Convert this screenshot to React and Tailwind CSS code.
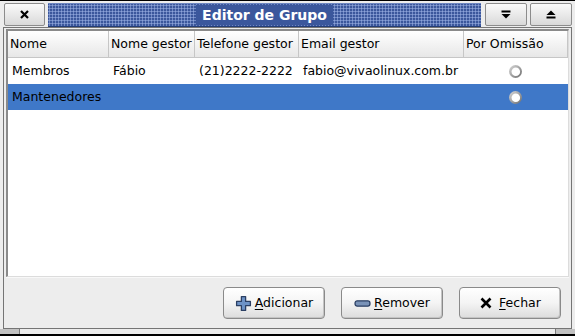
import React from "react";

const columns = [
  { label: "Nome", w: "w-[101px]" },
  { label: "Nome gestor", w: "w-[86px]" },
  { label: "Telefone gestor", w: "w-[104px]" },
  { label: "Email gestor", w: "w-[165px]" },
  { label: "Por Omissão", w: "w-[104px]" },
];

const rows = [
  { nome: "Membros", gestor: "Fábio", tel: "(21)2222-2222", email: "fabio@vivaolinux.com.br", selected: false },
  { nome: "Mantenedores", gestor: "", tel: "", email: "", selected: true },
];

const Radio = () => (
  <svg width="15" height="15" viewBox="0 0 15 15">
    <defs>
      <linearGradient id="rg" x1="0" y1="0" x2="1" y2="1">
        <stop offset="0" stopColor="#dcdcdc" />
        <stop offset="1" stopColor="#6a6a6a" />
      </linearGradient>
    </defs>
    <circle cx="7.5" cy="7.5" r="6.5" fill="url(#rg)" />
    <circle cx="7.8" cy="7.8" r="4.3" fill="#ffffff" />
  </svg>
);

const TitleButton = ({ children, className }) => (
  <div
    className={`h-[23px] flex items-center justify-center border border-[#8c8c8c] rounded-[2px] bg-gradient-to-b from-[#fafafa] to-[#d9d9d9] ${className}`}
  >
    {children}
  </div>
);

const ActionButton = ({ icon, first, rest }) => (
  <button className="w-[102px] h-[32px] flex items-center justify-center gap-[3px] border border-[#8a8a8a] rounded-[4px] bg-gradient-to-b from-[#ffffff] via-[#f4f4f4] to-[#dcdcdc] shadow-[inset_-1px_-1px_0_#c4c4c4] text-[12.5px] text-black">
    {icon}
    <span>
      <span className="underline underline-offset-2">{first}</span>
      {rest}
    </span>
  </button>
);

export default function App() {
  return (
    <div className="w-[575px] h-[336px] bg-[#ededed] border-t border-b-2 border-black flex flex-col overflow-hidden font-['DejaVu_Sans',sans-serif] text-[12.5px] text-black">
      {/* Title bar */}
      <div className="flex items-start pt-[2px] pl-[4px] pr-[3px] h-[26px] gap-[3px]">
        <TitleButton className="w-[41px]">
          <svg width="9" height="9" viewBox="0 0 9 9">
            <path d="M1 1 L8 8 M8 1 L1 8" stroke="#000" strokeWidth="2.2" />
          </svg>
        </TitleButton>
        <div className="flex-1 h-[24px] flex items-center justify-center border-t border-[#6d86c2] border-b border-b-[#243d78] bg-[#3b579c] bg-[radial-gradient(circle_at_1.5px_1.5px,#8ba2d8_0.9px,transparent_1.2px)] bg-[length:3px_3px]">
          <span className="bg-[#3b579c] px-[6px] text-white font-bold text-[14px] leading-[20px]">
            Editor de Grupo
          </span>
        </div>
        <TitleButton className="w-[42px] ml-[1px]">
          <svg width="10" height="9" viewBox="0 0 10 9">
            <rect x="0.5" y="0.5" width="9" height="2" fill="#000" />
            <path d="M0.5 4 L9.5 4 L5 8.5 Z" fill="#000" />
          </svg>
        </TitleButton>
        <TitleButton className="w-[42px]">
          <svg width="10" height="9" viewBox="0 0 10 9">
            <path d="M0.5 5 L9.5 5 L5 0.5 Z" fill="#000" />
            <rect x="0.5" y="6.5" width="9" height="2" fill="#000" />
          </svg>
        </TitleButton>
      </div>

      {/* Window body */}
      <div className="mx-[3px] flex-1 flex flex-col border border-[#757575] pt-[1px] px-[2px]">
        <div className="flex-1 bg-white border-t-2 border-l-2 border-[#8a8a8a] border-r border-b border-r-[#dcdcdc] border-b-[#dcdcdc]">
          <div className="flex h-[27px] bg-gradient-to-b from-[#ffffff] to-[#e6e6e6]">
            {columns.map((c) => (
              <div
                key={c.label}
                className={`${c.w} shrink-0 flex items-center pl-[2px] border-r border-b border-[#c6c6c6] whitespace-nowrap overflow-hidden`}
              >
                {c.label}
              </div>
            ))}
            <div className="flex-1 border-b border-[#c6c6c6]" />
          </div>
          {rows.map((r) => (
            <div
              key={r.nome}
              className={`flex h-[26px] items-center ${r.selected ? "bg-[#3f78c8]" : ""}`}
            >
              <div className="w-[101px] shrink-0 pl-[4px] whitespace-nowrap">{r.nome}</div>
              <div className="w-[86px] shrink-0 pl-[4px] whitespace-nowrap">{r.gestor}</div>
              <div className="w-[104px] shrink-0 pl-[4px] whitespace-nowrap">{r.tel}</div>
              <div className="w-[165px] shrink-0 pl-[4px] whitespace-nowrap">{r.email}</div>
              <div className="w-[104px] shrink-0 flex justify-center pr-[2px]">
                <Radio />
              </div>
            </div>
          ))}
        </div>

        <div className="h-[51px] flex items-start justify-end gap-[16px] pt-[9px] pr-[8px] border-t border-[#f8f8f8]">
          <ActionButton
            first="A"
            rest="dicionar"
            icon={
              <svg width="17" height="17" viewBox="0 0 16 16">
                <path
                  d="M6 1.5 H10 V6 H14.5 V10 H10 V14.5 H6 V10 H1.5 V6 H6 Z"
                  fill="#6d92c6"
                  stroke="#2b3f63"
                  strokeWidth="1.2"
                  strokeLinejoin="round"
                />
              </svg>
            }
          />
          <ActionButton
            first="R"
            rest="emover"
            icon={
              <svg width="17" height="17" viewBox="0 0 16 16">
                <rect x="1" y="5.5" width="14" height="5" rx="2" fill="#7a93b8" stroke="#2b3f63" strokeWidth="1.2" />
              </svg>
            }
          />
          <ActionButton
            first="F"
            rest="echar"
            icon={
              <svg width="14" height="14" viewBox="0 0 14 14" className="mr-[3px]">
                <path d="M2.5 2.5 L11.5 11.5 M11.5 2.5 L2.5 11.5" stroke="#000" strokeWidth="2.6" />
              </svg>
            }
          />
        </div>
      </div>

      {/* Status / grip strip */}
      <div className="h-[5px] flex">
        <div className="w-[20px] bg-[#c2c2c2] border-r border-[#7a7a7a]" />
        <div className="flex-1" />
        <div className="w-[20px] bg-[#c2c2c2] border-l border-[#7a7a7a]" />
      </div>
    </div>
  );
}
